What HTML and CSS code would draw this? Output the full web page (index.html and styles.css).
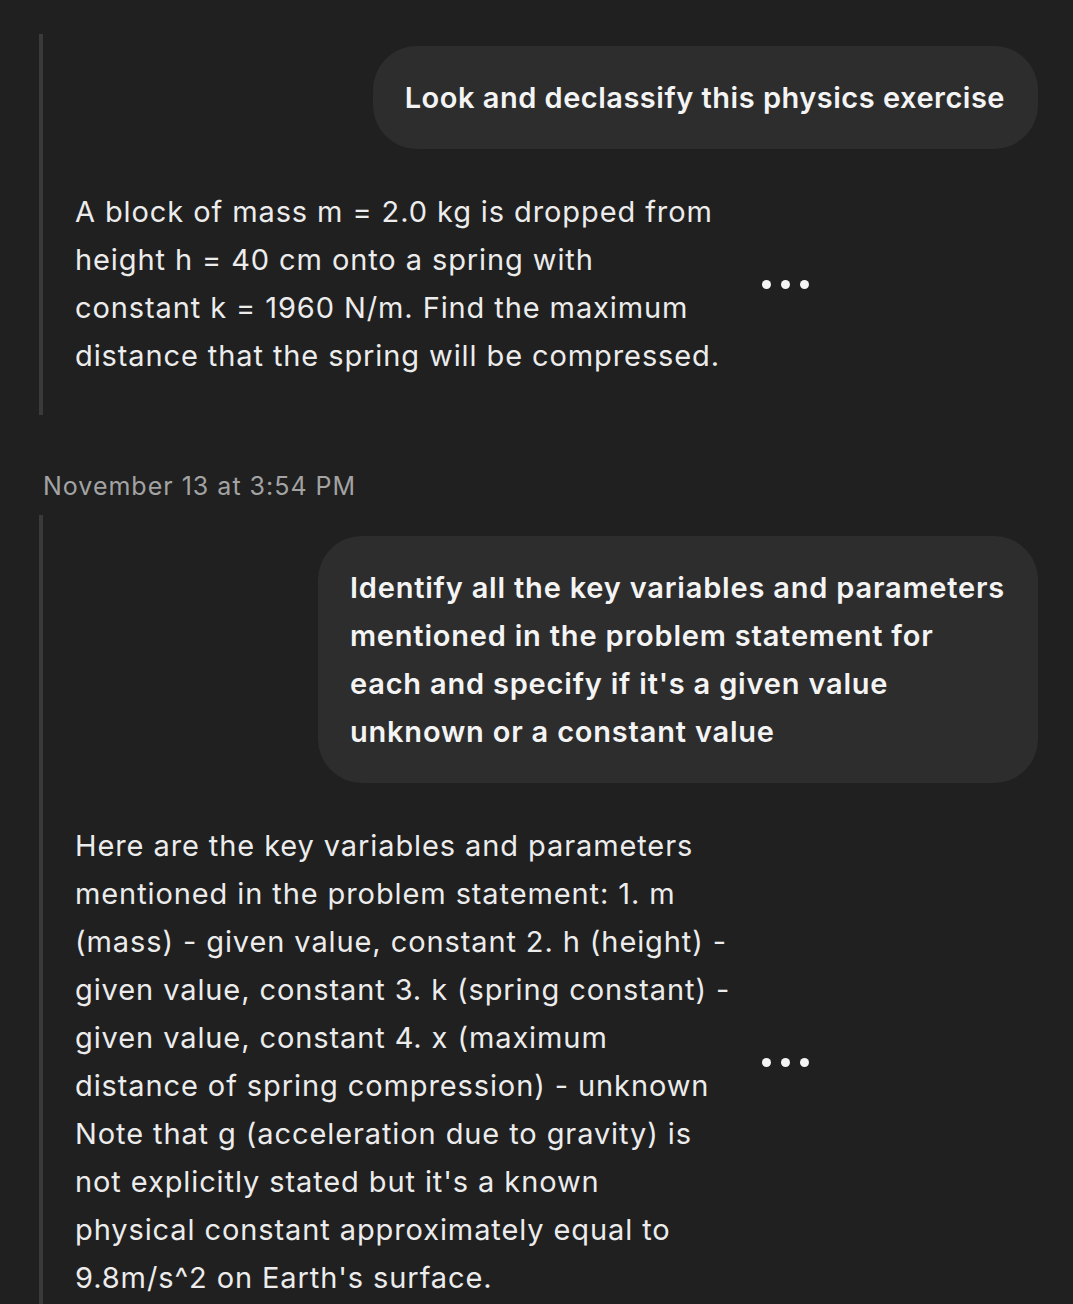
FILE: index.html
```html
<!DOCTYPE html>
<html>
<head>
<meta charset="utf-8">
<link rel="stylesheet" href="styles.css">
</head>
<body>
<div class="chat">
  <section class="group first">
    <div class="bubble-row">
      <div class="bubble tight">Look and declassify this physics exercise</div>
    </div>
    <div class="reply">
      <p class="reply-text">A block of mass m = 2.0 kg is dropped from<br>height h = 40 cm onto a spring with<br>constant k = 1960 N/m. Find the maximum<br>distance that the spring will be compressed.</p>
      <div class="dots"><span></span><span></span><span></span></div>
    </div>
  </section>

  <div class="timestamp">November 13 at 3:54 PM</div>

  <section class="group second">
    <div class="bubble-row">
      <div class="bubble wide">Identify all the key variables and parameters<br>mentioned in the problem statement for<br>each and specify if it's a given value<br>unknown or a constant value</div>
    </div>
    <div class="reply">
      <p class="reply-text">Here are the key variables and parameters<br>mentioned in the problem statement: 1. m<br>(mass) - given value, constant 2. h (height) -<br>given value, constant 3. k (spring constant) -<br>given value, constant 4. x (maximum<br>distance of spring compression) - unknown<br>Note that g (acceleration due to gravity) is<br>not explicitly stated but it's a known<br>physical constant approximately equal to<br>9.8m/s^2 on Earth's surface.</p>
      <div class="dots"><span></span><span></span><span></span></div>
    </div>
  </section>
</div>
</body>
</html>
```

FILE: styles.css
```css
html, body {
  margin: 0;
  padding: 0;
  background: #202020;
}
body {
  width: 1073px;
  height: 1304px;
  overflow: hidden;
  font-family: Inter, "Noto Sans", sans-serif;
  color: #ededed;
}
.chat {
  padding-top: 34px;
  padding-left: 39px;
  padding-right: 35px;
}
.group {
  border-left: 4px solid #3a3a3a;
  display: flex;
  flex-direction: column;
}
.group.first {
  padding-top: 12px;
  padding-bottom: 35px;
}
.group.second {
  padding-top: 21px;
  padding-bottom: 40px;
}
.bubble-row {
  display: flex;
  justify-content: flex-end;
}
.bubble {
  background: #2d2d2d;
  border-radius: 44px;
  padding: 28px 33px 27px 32px;
  font-size: 29px;
  font-weight: 600;
  line-height: 48px;
  letter-spacing: 0.65px;
  color: #f4f4f4;
}
.bubble.tight {
  letter-spacing: 0.5px;
}
.bubble.wide {
  letter-spacing: 0.8px;
}
.reply {
  display: flex;
  align-items: center;
  margin-top: 39px;
  padding-left: 32px;
}
.reply-text {
  margin: 0;
  width: 687px;
  font-size: 29px;
  line-height: 48px;
  letter-spacing: 0.9px;
  color: #ececec;
}
.dots {
  display: flex;
  gap: 10px;
}
.dots span {
  width: 9px;
  height: 9px;
  border-radius: 50%;
  background: #f4f4f4;
}
.timestamp {
  padding: 56px 0 0 4px;
  height: 44px;
  font-size: 25px;
  line-height: 30px;
  letter-spacing: 1px;
  color: #a3a3a3;
}
```
